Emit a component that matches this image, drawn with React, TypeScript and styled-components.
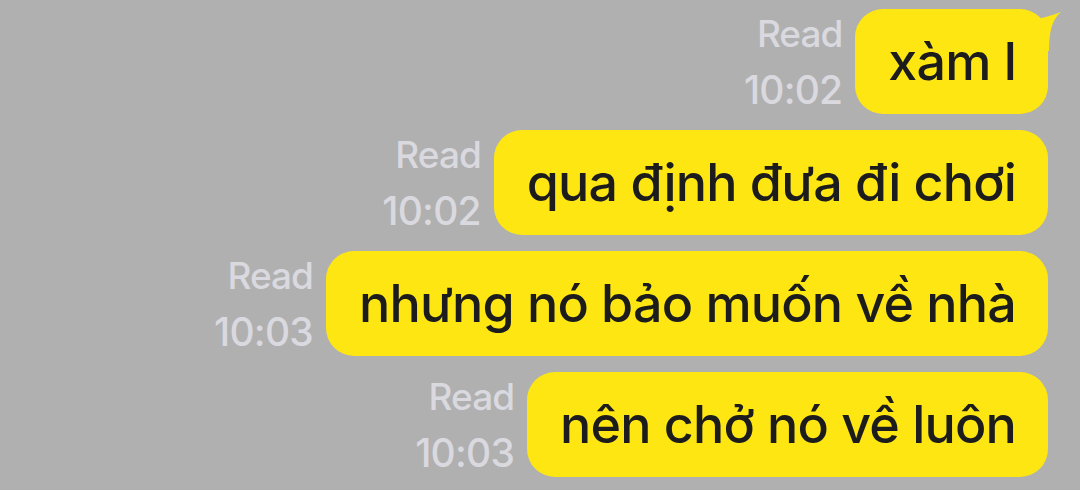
import { createGlobalStyle, styled } from "styled-components";

const Global = createGlobalStyle`
  html, body {
    margin: 0;
    padding: 0;
    background: #b0b0b0;
  }
  body {
    font-family: Inter, "Liberation Sans", Arial, sans-serif;
  }
`;

const Screen = styled.div`
  width: 1080px;
  height: 490px;
  overflow: hidden;
  background: #b0b0b0;
  box-sizing: border-box;
  padding: 9px 32px 0 0;
  display: flex;
  flex-direction: column;
  gap: 16px;
`;

const Row = styled.div`
  display: flex;
  justify-content: flex-end;
  align-items: flex-end;
  gap: 13px;
`;

const Meta = styled.div`
  display: flex;
  flex-direction: column;
  align-items: flex-end;
  padding-bottom: 2px;
  color: #d9d9df;
  font-weight: 500;
`;

const ReadLabel = styled.span`
  font-size: 37px;
  line-height: 48px;
  margin-bottom: 10px;
  letter-spacing: -1px;
`;

const Time = styled.span`
  font-size: 39px;
  line-height: 44px;
  letter-spacing: -0.8px;
`;

const Bubble = styled.div`
  position: relative;
  background: #fee612;
  color: #1c1c1c;
  font-size: 52px;
  font-weight: 500;
  line-height: 66px;
  letter-spacing: -0.8px;
  padding: 20px 32px 19px 33px;
  border-radius: 28px;
  white-space: nowrap;
`;

const Tail = styled.svg`
  position: absolute;
  top: 0;
  right: -14px;
  width: 34px;
  height: 50px;
`;

type Msg = { text: string; time: string; tail?: boolean };

const messages: Msg[] = [
  { text: "xàm l", time: "10:02", tail: true },
  { text: "qua định đưa đi chơi", time: "10:02" },
  { text: "nhưng nó bảo muốn về nhà", time: "10:03" },
  { text: "nên chở nó về luôn", time: "10:03" },
];

function Message({ text, time, tail }: Msg) {
  return (
    <Row>
      <Meta>
        <ReadLabel>Read</ReadLabel>
        <Time>{time}</Time>
      </Meta>
      <Bubble>
        {tail && (
          <Tail viewBox="0 0 34 50">
            <path d="M2 12 C 12 9, 23 7, 33 3 C 25 10, 21 20, 21 42 L 0 42 Z" fill="#fee612" />
          </Tail>
        )}
        {text}
      </Bubble>
    </Row>
  );
}

export default function App() {
  return (
    <>
      <Global />
      <Screen>
        {messages.map((m, i) => (
          <Message key={i} {...m} />
        ))}
      </Screen>
    </>
  );
}
